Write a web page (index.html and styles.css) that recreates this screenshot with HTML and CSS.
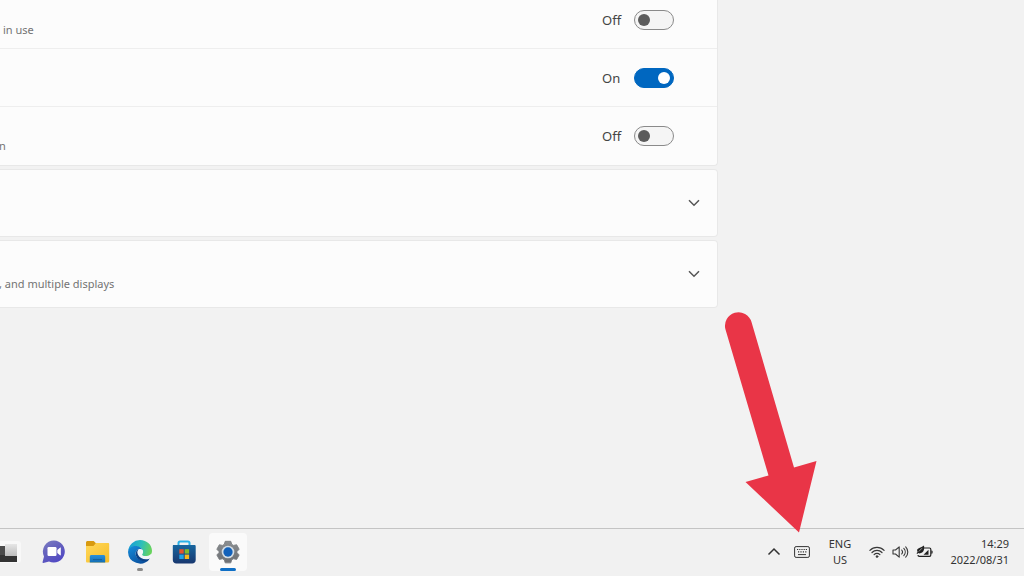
FILE: index.html
```html
<!DOCTYPE html>
<html lang="en">
<head>
<meta charset="utf-8">
<title>Taskbar settings</title>
<link rel="stylesheet" href="styles.css">
</head>
<body>
<main class="settings">
  <ul class="card options">
    <li class="option">
      <span class="hint">in use</span>
      <label class="switch"><span class="state">Off</span><input type="checkbox" role="switch"></label>
    </li>
    <li class="option">
      <label class="switch"><span class="state">On</span><input type="checkbox" role="switch" checked></label>
    </li>
    <li class="option">
      <span class="hint hint-flush">n</span>
      <label class="switch"><span class="state">Off</span><input type="checkbox" role="switch"></label>
    </li>
  </ul>
  <button class="card expander" aria-label="Expand section">
    <svg class="chevron" width="12" height="8" viewBox="0 0 12 8"><path d="M1 1.2 6 6.2 11 1.2"/></svg>
  </button>
  <button class="card expander">
    <span class="hint hint-flush">, and multiple displays</span>
    <svg class="chevron" width="12" height="8" viewBox="0 0 12 8"><path d="M1 1.2 6 6.2 11 1.2"/></svg>
  </button>
</main>

<footer class="taskbar">
  <nav class="apps">
    <button class="app" aria-label="Task view">
      <svg width="28" height="28" viewBox="0 0 28 28">
        <defs><linearGradient id="tv" x1="0" y1="0" x2="0" y2="1"><stop offset="0" stop-color="#e6e6e6"/><stop offset="1" stop-color="#bdbdbd"/></linearGradient></defs>
        <rect x="2" y="3" width="24" height="22" rx="3" fill="#f8f8f8"/>
        <path d="M2 8h8v9h12v7H2z" fill="#333"/>
        <path d="M2 8h8v9H2z" fill="#4b4b4b"/>
        <rect x="10" y="6" width="12" height="12" fill="url(#tv)"/>
      </svg>
    </button>
    <button class="app" aria-label="Chat">
      <svg width="28" height="28" viewBox="0 0 28 28">
        <defs><linearGradient id="chat" x1="0" y1="0" x2="0.6" y2="1"><stop offset="0" stop-color="#7d7fc2"/><stop offset="0.5" stop-color="#6460bd"/><stop offset="1" stop-color="#5149c4"/></linearGradient></defs>
        <path d="M15 2.5a11 11 0 1 1-5 20.9L4.3 25c-.5.1-.9-.3-.8-.8L5 18.4A11 11 0 0 1 15 2.5z" fill="url(#chat)"/>
        <rect x="8.5" y="9" width="9" height="9" rx="1.2" fill="#fff"/>
        <path d="m18.3 12 2.7-2.3c.4-.3.8-.1.8.3v7c0 .4-.4.6-.8.3L18.3 15z" fill="#fff"/>
      </svg>
    </button>
    <button class="app" aria-label="File Explorer">
      <svg width="28" height="28" viewBox="0 0 28 28">
        <defs><linearGradient id="fold" x1="0" y1="0" x2="1" y2="1"><stop offset="0" stop-color="#ffd85b"/><stop offset="1" stop-color="#f7bd27"/></linearGradient><linearGradient id="tray" x1="0" y1="0" x2="0" y2="1"><stop offset="0" stop-color="#2a91dc"/><stop offset="1" stop-color="#126eb5"/></linearGradient></defs>
        <path d="M4.500 3h6.200l2.500 2.500-2 2.500H3V4.500C3 3.600 3.700 3 4.500 3z" fill="#d89a10"/>
        <path d="M3 8h7.500L13 5h12c.8 0 1.200.5 1.200 1.200V23c0 .9-.5 1.500-1.300 1.500H4.300C3.500 24.500 3 24 3 23z" fill="url(#fold)"/>
        <path d="M8.500 17h12c1 0 1.700.7 1.700 1.700v5.800H6.800v-5.800C6.800 17.700 7.500 17 8.500 17z" fill="url(#tray)"/>
        <rect x="10" y="21" width="9" height="1.200" fill="#1462a0"/>
      </svg>
    </button>
    <button class="app open" aria-label="Microsoft Edge">
      <svg width="28" height="28" viewBox="0 0 28 28">
        <defs><linearGradient id="edge1" x1="0" y1="0.2" x2="1" y2="0.4"><stop offset="0" stop-color="#159bd9"/><stop offset="0.55" stop-color="#2dbfb9"/><stop offset="1" stop-color="#67d35c"/></linearGradient><linearGradient id="edge2" x1="0" y1="0" x2="0.7" y2="1"><stop offset="0" stop-color="#168ddb"/><stop offset="1" stop-color="#0a4f9d"/></linearGradient></defs>
        <path d="M2.200 13A12 12 0 0 1 14 2c7 0 12 5.100 12 10.700 0 4-3 6.300-6.300 6.300-2.900 0-4.400-1.200-4.100-2.100.3-.8 1.200-1.200 1.200-3.200 0-2.700-2.600-4.900-6.300-4.900-4 0-7 2.400-8.300 4.200z" fill="url(#edge1)"/>
        <path d="M2 14C2.600 10.500 5.500 8 9.500 8c3.500 0 6.400 2 7.100 4.400-1-1-2.400-1.400-3.600-1.100-3 .7-4.100 3.700-2.900 6.700 1.500 3.800 6.500 5.600 13.100 3.200A12 12 0 0 1 2 14z" fill="url(#edge2)"/>
        <path d="M10.200 18.200c-1.300-3.200 0-6.200 2.800-6.900-1.200 1.100-1.700 3.200-.9 5 1.300 3.100 5.400 5 10.900 3.300.8-.2 1 .2.600.9-.6 1.100-1.300 1.900-2.300 2.700-4.800.6-9.600-1.200-11.100-5z" fill="#0d4388"/>
        <path d="M12.800 11.300c2.200-.8 4.600.5 4.300 2.600-.1 1.200-.9 1.800-.9 2.500 0 1.100 2 1.800 4.600 1.500 1.900-.2 3.400-.9 4.600-2.200l.5 3.300c-1 1-2 1.700-3.100 1.900-4.700 1.200-9.300-.8-10.900-4.400-.8-2-.5-4.100.9-5.200z" fill="#f1f5f7"/>
      </svg>
    </button>
    <button class="app" aria-label="Microsoft Store">
      <svg width="28" height="28" viewBox="0 0 28 28">
        <defs><linearGradient id="bag" x1="0" y1="0" x2="0" y2="1"><stop offset="0" stop-color="#17669f"/><stop offset="1" stop-color="#18376f"/></linearGradient></defs>
        <path d="M8.500 9V5c0-1 .6-1.600 1.600-1.600h7.800c1 0 1.600.6 1.600 1.600v4" fill="none" stroke="#2ab1e8" stroke-width="2"/>
        <path d="M3.500 7h21c.7 0 1.200.5 1.200 1.200V22c0 2-1.500 3.500-3.500 3.500H6.300c-2 0-3.500-1.500-3.500-3.500V8.200c0-.7.200-1.200.7-1.200z" fill="url(#bag)"/>
        <path d="M9.300 11.200h4.400v4.400H9.300z" fill="#e5532c"/><path d="M14.700 11.200h4.400v4.400h-4.400z" fill="#82b92c"/>
        <path d="M9.300 16.600h4.400V21H9.300z" fill="#20a4e6"/><path d="M14.700 16.600h4.400V21h-4.400z" fill="#f6b71c"/>
      </svg>
    </button>
    <button class="app active" aria-label="Settings">
      <svg width="26" height="26" viewBox="0 0 28 28">
        <defs><linearGradient id="gear" x1="0" y1="0" x2="0" y2="1"><stop offset="0" stop-color="#8b8e91"/><stop offset="1" stop-color="#6c6f73"/></linearGradient></defs>
        <path d="M11 2.500h6l1 3.300 2 1.100 3.300-.7 2.700 4.800-2.300 2.500v1.200l2.300 2.500-2.700 4.800-3.300-.7-2 1.100-1 3.300h-6l-1-3.300-2-1.100-3.300.7L2 17.200l2.300-2.500v-1.200L2 11l2.700-4.800 3.300.7 2-1.100z" fill="url(#gear)" stroke="#7b7e82" stroke-width="1" stroke-linejoin="round"/>
        <circle cx="14" cy="14" r="6.800" fill="#d2dce4"/>
        <circle cx="14" cy="14" r="5" fill="#1261ba"/>
      </svg>
    </button>
  </nav>

  <div class="tray">
    <button class="tray-item overflow" aria-label="Show hidden icons">
      <svg width="14" height="9" viewBox="0 0 14 9"><path d="M1.500 7.500 7 2l5.500 5.500" fill="none" stroke="#333" stroke-width="1.500"/></svg>
    </button>
    <button class="tray-item keyboard" aria-label="Touch keyboard">
      <svg width="16" height="12" viewBox="0 0 16 12" fill="none" stroke="#333">
        <rect x=".6" y=".6" width="14.800" height="10.800" rx="1.500"/>
        <path d="M3 3.500h10" stroke-width="1.200" stroke-dasharray="1.200 1"/>
        <path d="M4 5.900h8.500" stroke-width="1.200" stroke-dasharray="1.200 1.200"/>
        <path d="M4 8.600h8"/>
      </svg>
    </button>
    <button class="tray-item language"><span>ENG</span><span>US</span></button>
    <button class="tray-item status" aria-label="Network, volume and battery">
      <svg width="16" height="14" viewBox="0 0 16 14" fill="none" stroke="#383838" stroke-width="1.200" stroke-linecap="round">
        <path d="M.9 5.300a10 10 0 0 1 14.200 0M3 7.500a7.100 7.100 0 0 1 10 0M5.100 9.600a4.100 4.100 0 0 1 5.800 0"/>
        <circle cx="8" cy="11.600" r="1" fill="#383838" stroke-width=".6"/>
      </svg>
      <svg width="17" height="14" viewBox="0 0 17 14" fill="none" stroke="#383838" stroke-width="1.100" stroke-linecap="round" stroke-linejoin="round">
        <path d="M1 5h2.500l3.700-3.200v10.400L3.500 9H1zM9.700 5a3 3 0 0 1 0 4M11.800 3.400a5.300 5.300 0 0 1 0 7.200M13.700 1.800a7.500 7.500 0 0 1 0 10.400"/>
      </svg>
      <svg width="17" height="14" viewBox="0 0 17 14">
        <path d="M6 3h7.500c.8 0 1.300.5 1.300 1.300V10c0 .8-.5 1.300-1.300 1.300H3.300C2.500 11.300 2 10.800 2 10" fill="none" stroke="#222" stroke-width="1.200"/>
        <path d="M15.300 5.500c.8 0 1.300.3 1.300 1v1.200c0 .7-.5 1-1.300 1z" fill="#222"/>
        <path d="M7.500 9.800 12.500 4.800v5z" fill="#222"/>
        <path d="M8 .4c.6 3.400.1 6.900-3.700 7.900-.8.200-1.500 0-2-.4L1.300 9l-.8-.7 1.100-1.400C-.4 2.900 4 3.300 8 .4z" fill="#222"/>
        <path d="M2.800 6.500 6 3.200" stroke="#ddd" stroke-width=".6"/>
      </svg>
    </button>
    <button class="tray-item clock"><span>14:29</span><span>2022/08/31</span></button>
  </div>
</footer>

<svg class="pointer" width="100" height="228" viewBox="0 0 100 228" aria-hidden="true">
  <path d="M5.500 21.500A13.500 13.500 0 0 1 31.500 14L74 159.500 96.500 153 79 224.500 25.500 174 48.500 167.500z" fill="#e93547"/>
</svg>
</body>
</html>
```
FILE: styles.css
```css
* {
  box-sizing: border-box;
}

body {
  margin: 0;
  height: 100vh;
  display: flex;
  flex-direction: column;
  overflow: hidden;
  background: #f2f2f2;
  color: #444;
  font-family: "Noto Sans", "Open Sans", sans-serif;
}

button {
  margin: 0;
  padding: 0;
  border: 0;
  background: none;
  color: inherit;
  font: inherit;
}

svg {
  display: block;
  flex: none;
}

.settings {
  flex: 1;
  min-height: 0;
  display: flex;
  flex-direction: column;
  gap: 3px;
  margin-top: -9px;
  padding-right: 306px;
}

.card {
  flex: none;
  background: #fcfcfc;
  border: 1px solid #e8e8e8;
  border-left: 0;
  border-radius: 0 4px 4px 0;
}

.options {
  margin: 0;
  padding: 0;
  border-top: 0;
  list-style: none;
}

.option {
  display: flex;
  align-items: center;
  min-height: 58px;
  padding: 0 43px 0 3px;
}

.option + .option {
  box-shadow: 0 -1px #eee;
}

.hint {
  align-self: flex-end;
  padding-bottom: 11px;
  color: #737373;
  font-size: 11px;
  line-height: 16px;
}

.hint-flush {
  margin-left: -4px;
}

.switch {
  display: flex;
  align-items: center;
  margin-left: auto;
}

.state {
  width: 32px;
  font-size: 13px;
  line-height: 20px;
}

.switch input {
  appearance: none;
  display: flex;
  align-items: center;
  width: 40px;
  height: 20px;
  margin: 0;
  padding: 0 3px;
  border: 1px solid #8a8a8a;
  border-radius: 10px;
  background: #f5f5f5;
}

.switch input::before {
  content: "";
  width: 12px;
  height: 12px;
  border-radius: 50%;
  background: #5c5c5c;
}

.switch input:checked {
  justify-content: flex-end;
  border-color: #0067c0;
  background: #0067c0;
}

.switch input:checked::before {
  background: #fff;
}

.expander {
  display: flex;
  align-items: center;
  min-height: 68px;
  padding: 0 17px 0 3px;
}

.expander .hint {
  padding-bottom: 15px;
}

.chevron {
  margin-left: auto;
  fill: none;
  stroke: #555;
  stroke-width: 1.5;
}

.taskbar {
  flex: none;
  display: flex;
  justify-content: space-between;
  height: 48px;
  padding-bottom: 2px;
  border-top: 1px solid #c4c4c4;
  background: #f1f1f1;
  color: #333;
}

.apps {
  display: flex;
  align-items: center;
  justify-content: space-between;
  width: 257px;
  margin-left: -10px;
}

.app {
  position: relative;
  display: flex;
  align-items: center;
  justify-content: center;
  width: 38px;
  height: 38px;
  border-radius: 4px;
}

.active {
  background: #fafafa;
}

.open::after,
.active::after {
  content: "";
  position: absolute;
  bottom: 0;
  width: 6px;
  height: 3px;
  border-radius: 2px;
  background: #8b8b8b;
}

.active::after {
  width: 16px;
  background: #0f6fc6;
}

.tray {
  display: flex;
  align-items: center;
  padding-right: 15px;
  font-size: 11px;
  line-height: 16px;
}

.tray-item {
  display: flex;
  align-items: center;
}

.keyboard {
  margin-left: 13px;
}

.language {
  flex-direction: column;
  width: 26px;
  margin-left: 17px;
}

.status {
  gap: 7px;
  margin-left: 16px;
}

.clock {
  flex-direction: column;
  align-items: flex-end;
  width: 60px;
  margin-left: 16px;
}

.pointer {
  position: absolute;
  right: 204px;
  bottom: 40px;
}
```
